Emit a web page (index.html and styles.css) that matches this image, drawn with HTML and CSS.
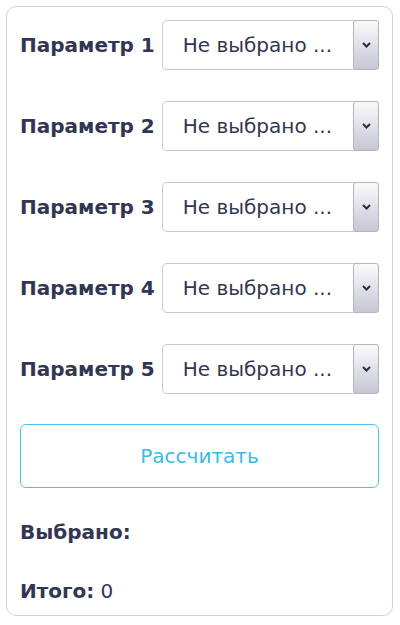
FILE: index.html
```html
<!DOCTYPE html>
<html lang="ru">
<head>
<meta charset="utf-8">
<title>Калькулятор</title>
<link rel="stylesheet" href="styles.css">
</head>
<body>
<div class="card">
  <div class="row">
    <span class="label">Параметр 1</span>
    <div class="select"><span class="value">Не выбрано ...</span><span class="arrow"><svg width="9" height="6" viewBox="0 0 9 6"><path d="M1 1 L4.5 4.5 L8 1" fill="none" stroke="#2c2e3a" stroke-width="2"/></svg></span></div>
  </div>
  <div class="row">
    <span class="label">Параметр 2</span>
    <div class="select"><span class="value">Не выбрано ...</span><span class="arrow"><svg width="9" height="6" viewBox="0 0 9 6"><path d="M1 1 L4.5 4.5 L8 1" fill="none" stroke="#2c2e3a" stroke-width="2"/></svg></span></div>
  </div>
  <div class="row">
    <span class="label">Параметр 3</span>
    <div class="select"><span class="value">Не выбрано ...</span><span class="arrow"><svg width="9" height="6" viewBox="0 0 9 6"><path d="M1 1 L4.5 4.5 L8 1" fill="none" stroke="#2c2e3a" stroke-width="2"/></svg></span></div>
  </div>
  <div class="row">
    <span class="label">Параметр 4</span>
    <div class="select"><span class="value">Не выбрано ...</span><span class="arrow"><svg width="9" height="6" viewBox="0 0 9 6"><path d="M1 1 L4.5 4.5 L8 1" fill="none" stroke="#2c2e3a" stroke-width="2"/></svg></span></div>
  </div>
  <div class="row">
    <span class="label">Параметр 5</span>
    <div class="select"><span class="value">Не выбрано ...</span><span class="arrow"><svg width="9" height="6" viewBox="0 0 9 6"><path d="M1 1 L4.5 4.5 L8 1" fill="none" stroke="#2c2e3a" stroke-width="2"/></svg></span></div>
  </div>
  <button class="calc" type="button">Рассчитать</button>
  <p class="result">Выбрано:</p>
  <p class="total"><b>Итого:</b> 0</p>
</div>
</body>
</html>
```

FILE: styles.css
```css
html, body {
  margin: 0;
  padding: 0;
  background: #ffffff;
}
body {
  padding: 6px 7px 0 6px;
  font-family: "DejaVu Sans", Verdana, sans-serif;
  color: #323652;
}
.card {
  border: 1px solid #d2d2d2;
  border-radius: 10px;
  padding: 13px 13px 14px 13px;
  height: 581px;
}
.row {
  display: flex;
  align-items: center;
  gap: 7px;
  margin-bottom: 31px;
}
.label {
  font-weight: bold;
  font-size: 20px;
  white-space: nowrap;
}
.select {
  flex: 1;
  display: flex;
  height: 50px;
  box-sizing: border-box;
  border: 1px solid #c9c9c9;
  border-radius: 5px;
  background: #fff;
}
.value {
  flex: 1;
  display: flex;
  align-items: center;
  padding-left: 20px;
  font-size: 20px;
  color: #323652;
  white-space: nowrap;
  overflow: hidden;
}
.arrow {
  flex: none;
  width: 24px;
  margin: -1px -1px -1px 0;
  display: flex;
  align-items: center;
  justify-content: center;
  border: 1px solid #b4b4bc;
  border-radius: 3px;
  background: linear-gradient(#fafafc, #c6c6d6);
}
.calc {
  display: block;
  width: 100%;
  height: 64px;
  margin: -1px 0 0 0;
  border: 1px solid #49c3e6;
  border-radius: 6px;
  background: #fff;
  color: #39bbe5;
  font-family: "DejaVu Sans", Verdana, sans-serif;
  font-size: 20px;
}
.result {
  margin: 33px 0 0 0;
  font-weight: bold;
  font-size: 20px;
  line-height: 22px;
}
.total {
  margin: 37px 0 0 0;
  font-size: 20px;
  line-height: 22px;
}
```
